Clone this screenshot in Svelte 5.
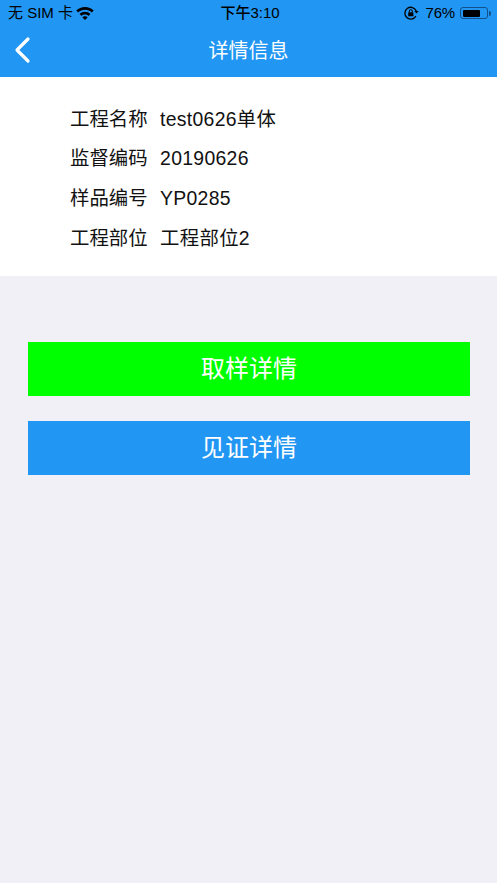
<script>
  const rows = [
    { label: '工程名称', value: 'test0626单体' },
    { label: '监督编码', value: '20190626' },
    { label: '样品编号', value: 'YP0285' },
    { label: '工程部位', value: '工程部位2' }
  ];
</script>

<div class="page">
  <header class="top">
    <div class="status">
      <div class="status-left">
        <span>无 SIM 卡</span>
        <svg class="wifi" viewBox="0 0 18 13" width="18" height="13">
          <path d="M9 0C5.600 0 2.600 1.300.3 3.500l1.900 2C4 3.800 6.400 2.800 9 2.800s5 1 6.800 2.700l1.900-2C15.400 1.300 12.400 0 9 0z" />
          <path d="M9 4.700c-2.100 0-4 .8-5.400 2.200l1.900 2C6.400 8 7.600 7.500 9 7.500s2.600.5 3.500 1.400l1.900-2C13 5.500 11.100 4.700 9 4.700z" />
          <path d="M9 9.200c-1.100 0-2 .4-2.700 1.100L9 13l2.700-2.700C11 9.600 10.100 9.200 9 9.200z" />
        </svg>
      </div>
      <div class="status-time">下午3:10</div>
      <div class="status-right">
        <svg class="lock" viewBox="0 0 15 14" width="15" height="14">
          <path d="M11.900 10.200A5.900 5.900 0 1 1 12.300 5" fill="none" stroke="#000" stroke-width="1.300" />
          <path d="M10.300 5h4.400l-2.200 2.600z" fill="#000" />
          <rect x="4.200" y="6.200" width="5.200" height="4" rx=".5" fill="#000" />
          <path d="M5.300 6.200V5.100a1.500 1.500 0 0 1 3 0v1.100" fill="none" stroke="#000" stroke-width="1" />
        </svg>
        <span class="percent">76%</span>
        <div class="battery"><div class="battery-fill" style="width: 76%"></div></div>
        <div class="battery-tip"></div>
      </div>
    </div>
    <div class="nav">
      <svg class="back" viewBox="0 0 18 28" width="18" height="28">
        <path d="M15 3 4 14l11 11" fill="none" stroke="#fff" stroke-width="3.200" stroke-linecap="round" stroke-linejoin="round" />
      </svg>
      <div class="nav-title">详情信息</div>
    </div>
  </header>

  <section class="info">
    {#each rows as row}
      <div class="row">
        <span class="label">{row.label}</span>
        <span class="value">{row.value}</span>
      </div>
    {/each}
  </section>

  <div class="actions">
    <button class="btn green">取样详情</button>
    <button class="btn blue">见证详情</button>
  </div>
</div>

<style>
  :global(body) {
    margin: 0;
    background: #f0f0f6;
  }

  .page {
    display: flex;
    flex-direction: column;
    min-height: 883px;
    background: #f0f0f6;
    font-family: "Liberation Sans", "Noto Sans CJK SC", sans-serif;
  }

  .top {
    background: #2196f3;
  }

  .status {
    display: flex;
    justify-content: space-between;
    align-items: center;
    position: relative;
    height: 26px;
    padding: 0 6px 0 8px;
    font-size: 15px;
    line-height: 26px;
    color: #000;
  }

  .status-left {
    display: flex;
    align-items: center;
    gap: 3px;
  }

  .wifi {
    fill: #000;
  }

  .status-time {
    position: absolute;
    left: 3px;
    right: 0;
    text-align: center;
    font-weight: 500;
  }

  .status-right {
    display: flex;
    align-items: center;
    gap: 6px;
  }

  .percent {
    margin-left: 1px;
    letter-spacing: -0.2px;
  }

  .battery {
    box-sizing: border-box;
    width: 28px;
    height: 12px;
    padding: 1.500px;
    margin-right: -5px;
    margin-left: -1px;
    border: 1px solid #12508a;
    border-radius: 3px;
  }

  .battery-fill {
    height: 100%;
    background: #000;
    border-radius: 1px;
  }

  .battery-tip {
    width: 2px;
    height: 5px;
    background: #12508a;
    border-radius: 0 2px 2px 0;
  }

  .nav {
    display: flex;
    align-items: center;
    justify-content: center;
    position: relative;
    height: 51px;
  }

  .back {
    position: absolute;
    left: 13px;
    top: 10px;
  }

  .nav-title {
    font-size: 20px;
    line-height: 48px;
    margin-bottom: 2px;
    color: #fff;
  }

  .info {
    display: flex;
    flex-direction: column;
    padding: 22px 0 19px 70px;
    background: #fff;
  }

  .row {
    display: flex;
    gap: 12.500px;
    height: 39.600px;
    align-items: center;
    font-size: 19.400px;
    line-height: 28px;
    color: #111;
  }

  .value {
    letter-spacing: 0.3px;
  }

  .actions {
    display: flex;
    flex-direction: column;
    gap: 25px;
    padding: 66px 27px 0 28px;
  }

  .btn {
    height: 54px;
    padding: 0;
    border: none;
    color: #fff;
    font-family: inherit;
    font-size: 24px;
    line-height: 54px;
  }

  .green {
    background: #00ff00;
  }

  .blue {
    background: #2196f3;
  }
</style>
